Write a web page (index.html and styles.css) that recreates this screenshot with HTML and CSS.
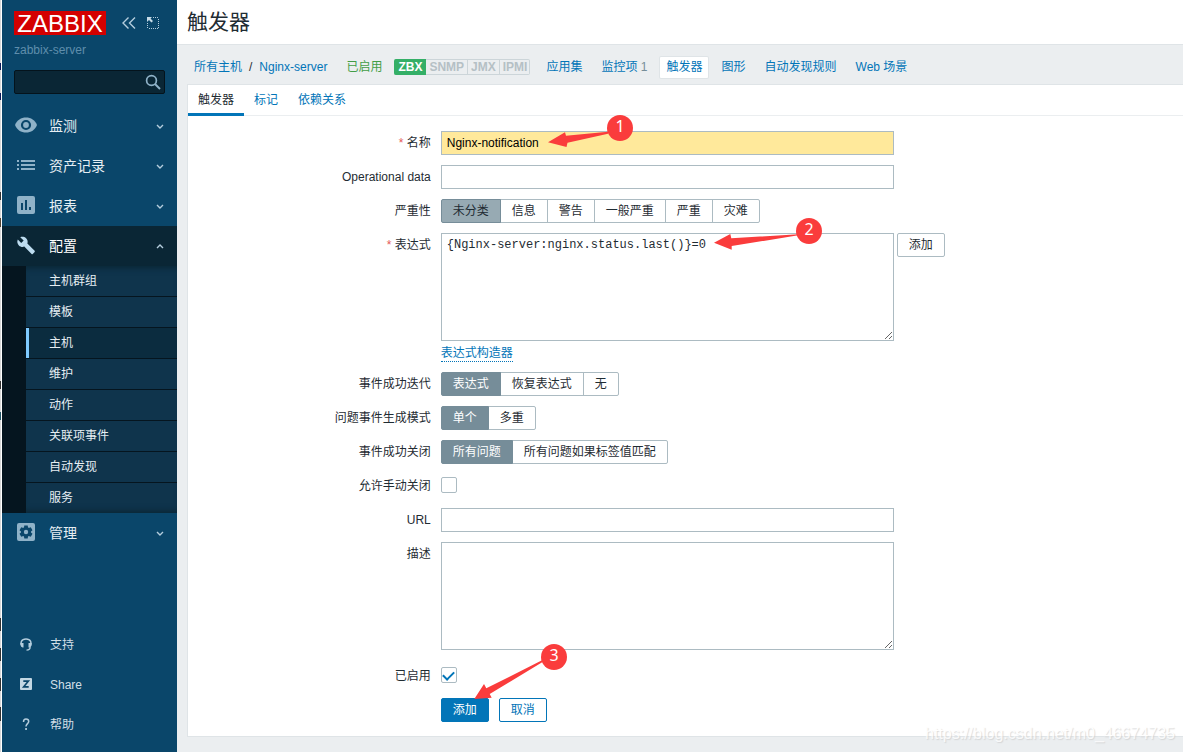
FILE: index.html
```html
<!DOCTYPE html>
<html lang="zh-CN">
<head>
<meta charset="utf-8">
<title>触发器</title>
<link rel="stylesheet" href="styles.css">
</head>
<body>
<div class="edge"></div>
<aside class="sidebar">
  <div class="brand">
    <a href="#" class="logo">ZABBIX</a>
    <button class="icon-btn" type="button" aria-label="收起"><svg width="16" height="14" viewBox="0 0 16 14"><path d="M7.500 1.500 2 7l5.500 5.500M14 1.500 8.500 7l5.500 5.500" fill="none" stroke="#b4cddd" stroke-width="1.400"/></svg></button>
    <button class="icon-btn" type="button" aria-label="隐藏"><svg width="14" height="14" viewBox="0 0 14 14"><path d="M7 1.500h6M12.500 3v10M1.500 7v6M3 12.500h9" fill="none" stroke="#b4cddd" stroke-dasharray="1 1"/><path d="M1 1h5L4.500 2.500 7 5 5.500 6.500 3 4 1 6z" fill="#c8dce8"/></svg></button>
  </div>
  <div class="server">zabbix-server</div>
  <form class="search">
    <input type="search" aria-label="搜索">
    <button type="button" aria-label="搜索"><svg width="16" height="16" viewBox="0 0 16 16"><circle cx="6.500" cy="6.500" r="4.900" fill="none" stroke="#8fb2c8" stroke-width="1.700"/><path d="m10 10 5 5" stroke="#8fb2c8" stroke-width="2"/></svg></button>
  </form>
  <nav class="menu">
    <a href="#" class="item"><svg class="ico" viewBox="0 0 22 20"><path d="M0 9C2 4 6 1.500 11 1.500S20 4 22 9c-2 5-6 7.500-11 7.500S2 14 0 9z"/><circle cx="11" cy="9" r="4" fill="none" stroke="#0a466a" stroke-width="2.200"/></svg><span>监测</span><svg class="chev" viewBox="0 0 8 6"><path d="m1 2 3 3 3-3"/></svg></a>
    <a href="#" class="item"><svg class="ico" viewBox="0 0 22 20"><path d="M2 4h2v2H2zM6 4h14v2H6zM2 8h2v2H2zM6 8h14v2H6zM2 12h2v2H2zM6 12h14v2H6z"/></svg><span>资产记录</span><svg class="chev" viewBox="0 0 8 6"><path d="m1 2 3 3 3-3"/></svg></a>
    <a href="#" class="item"><svg class="ico" viewBox="0 0 22 20"><rect x="2" y="0" width="18" height="18" rx="2"/><path fill="#0a466a" d="M6 7h2v7H6zM10 4h2v10h-2zM14 11h2v3h-2z"/></svg><span>报表</span><svg class="chev" viewBox="0 0 8 6"><path d="m1 2 3 3 3-3"/></svg></a>
    <a href="#" class="item open"><svg class="ico" viewBox="0 0 22 20"><path d="M19.600 16.500 11.500 8.400c.8-2 .3-4.400-1.400-6C8.300.700 5.700.300 3.600 1.300l3.800 3.800-2.700 2.600L.900 4C-.200 6.100.300 8.700 2.100 10.500c1.600 1.600 4 2.100 6 1.300l8.100 8.100c.4.400.9.400 1.300 0l2.100-2.100c.4-.300.4-1 0-1.300z" transform="translate(2 0) scale(.9)"/></svg><span>配置</span><svg class="chev" viewBox="0 0 8 6"><path d="m1 5 3-3 3 3"/></svg></a>
    <div class="submenu">
      <a href="#">主机群组</a>
      <a href="#">模板</a>
      <a href="#" class="current">主机</a>
      <a href="#">维护</a>
      <a href="#">动作</a>
      <a href="#">关联项事件</a>
      <a href="#">自动发现</a>
      <a href="#">服务</a>
    </div>
    <a href="#" class="item"><svg class="ico" viewBox="0 0 22 20"><rect x="2" y="0" width="18" height="18" rx="2"/><g fill="#0a466a"><circle cx="11" cy="9" r="5"/><path d="M9.300 2.500h3.400l.5 3H8.800zM9.300 15.500h3.400l.5-3H8.800z"/><path d="M9.300 2.500h3.400l.5 3H8.800zM9.300 15.500h3.400l.5-3H8.800z" transform="rotate(60 11 9)"/><path d="M9.300 2.500h3.400l.5 3H8.800zM9.300 15.500h3.400l.5-3H8.800z" transform="rotate(120 11 9)"/></g><circle cx="11" cy="9" r="2.200"/></svg><span>管理</span><svg class="chev" viewBox="0 0 8 6"><path d="m1 2 3 3 3-3"/></svg></a>
  </nav>
  <nav class="foot">
    <a href="#"><svg viewBox="0 0 14 14"><path d="M3 8.500C.500 5 2.500 1 7 1S13.500 5 11 8.500" fill="none" stroke="#b4cddd" stroke-width="1.500"/><path d="M1.600 5h2.900v4.500H3.500L2 8zM9.500 5h2.900v3L10.500 9.500h-1zM10.500 9h1.300c0 2.500-1.300 3.700-4.300 3.700v-1.300c2 0 3-.7 3-2.400z" fill="#b4cddd"/></svg>支持</a>
    <a href="#"><svg viewBox="0 0 14 14"><rect x="1" y="0" width="12" height="12" rx="1" fill="#c3d7e3"/><path d="M4.300 3.200h5L4.700 8.800h5" fill="none" stroke="#0a466a" stroke-width="1.700"/></svg>Share</a>
    <a href="#"><svg viewBox="0 0 14 14"><path d="M4.500 4C4.500 2 5.500 1 7 1s2.700 1 2.700 2.500C9.700 5.500 7 5.800 7 8.500" fill="none" stroke="#b4cddd" stroke-width="1.500"/><path d="M6.200 10h1.700v2H6.200z" fill="#b4cddd"/></svg>帮助</a>
  </nav>
</aside>
<main class="page">
  <header class="title"><h1>触发器</h1></header>
  <nav class="crumbs">
    <a href="#">所有主机</a><span class="slash">/</span><a href="#">Nginx-server</a>
    <span class="enabled">已启用</span>
    <span class="avail"><span class="on">ZBX</span><span>SNMP</span><span>JMX</span><span>IPMI</span></span>
    <span class="links"><a href="#">应用集</a><a href="#">监控项 <sup>1</sup></a><a href="#" class="here">触发器</a><a href="#">图形</a><a href="#">自动发现规则</a><a href="#">Web 场景</a></span>
  </nav>
  <section class="card">
    <nav class="tabs"><a href="#" class="active">触发器</a><a href="#">标记</a><a href="#">依赖关系</a></nav>
    <form class="form">
      <label class="label req" for="name">名称</label>
      <div class="field">
        <input class="text name" id="name" type="text" value="Nginx-notification">
        <svg class="note note-1" width="88" height="36" viewBox="547 114 88 36"><path d="M548 142.300 565 132.300l1 3.500 42-4v2l-40.500 9-1 4.200z"/><circle cx="620" cy="128" r="13"/><text x="620" y="132">1</text></svg>
      </div>
      <label class="label" for="opdata">Operational data</label>
      <div class="field"><input class="text" id="opdata" type="text"></div>
      <span class="label" id="l-sev">严重性</span>
      <div class="field"><div class="seg sev" role="radiogroup" aria-labelledby="l-sev">
        <label><input type="radio" name="sev" checked><span>未分类</span></label><label><input type="radio" name="sev"><span>信息</span></label><label><input type="radio" name="sev"><span>警告</span></label><label><input type="radio" name="sev"><span>一般严重</span></label><label><input type="radio" name="sev"><span>严重</span></label><label><input type="radio" name="sev"><span>灾难</span></label>
      </div></div>
      <label class="label req" for="expr">表达式</label>
      <div class="field expr">
        <div class="with-btn"><textarea class="area mono" id="expr" spellcheck="false">{Nginx-server:nginx.status.last()}=0</textarea><button class="btn plain" type="button">添加</button></div>
        <a href="#" class="builder">表达式构造器</a>
        <svg class="note note-2" width="110" height="34" viewBox="713 217 110 34"><path d="M714 242.700 730.300 234l1 4.300 67-4v1l-66.600 10.700v3.700z"/><circle cx="809" cy="231" r="13"/><text x="809" y="235">2</text></svg>
      </div>
      <span class="label" id="l-ok">事件成功迭代</span>
      <div class="field"><div class="seg" role="radiogroup" aria-labelledby="l-ok">
        <label><input type="radio" name="ok" checked><span>表达式</span></label><label><input type="radio" name="ok"><span>恢复表达式</span></label><label><input type="radio" name="ok"><span>无</span></label>
      </div></div>
      <span class="label" id="l-mode">问题事件生成模式</span>
      <div class="field"><div class="seg" role="radiogroup" aria-labelledby="l-mode">
        <label><input type="radio" name="mode" checked><span>单个</span></label><label><input type="radio" name="mode"><span>多重</span></label>
      </div></div>
      <span class="label" id="l-close">事件成功关闭</span>
      <div class="field"><div class="seg" role="radiogroup" aria-labelledby="l-close">
        <label><input type="radio" name="close" checked><span>所有问题</span></label><label><input type="radio" name="close"><span>所有问题如果标签值匹配</span></label>
      </div></div>
      <label class="label" for="manual">允许手动关闭</label>
      <div class="field check"><input id="manual" type="checkbox"></div>
      <label class="label" for="url">URL</label>
      <div class="field"><input class="text" id="url" type="text"></div>
      <label class="label" for="desc">描述</label>
      <div class="field desc"><textarea class="area" id="desc"></textarea></div>
      <label class="label" for="enabled">已启用</label>
      <div class="field check"><input id="enabled" type="checkbox" checked></div>
      <div class="field actions">
        <button class="btn primary" type="button">添加</button>
        <button class="btn" type="button">取消</button>
        <svg class="note note-3" width="95" height="57" viewBox="473 643 95 57"><path d="M474.300 699 484 684l2.300 4.300 55.700-28 1 1.500L489.700 694l2 3.700z"/><circle cx="554" cy="657" r="13"/><text x="554" y="661">3</text></svg>
      </div>
    </form>
  </section>
</main>
<div class="watermark">https://blog.csdn.net/m0_46674735</div>
</body>
</html>
```

FILE: styles.css
```css
* { box-sizing: border-box; }
body {
  margin: 0;
  min-height: 100vh;
  display: flex;
  position: relative;
  background: #ebeef0;
  color: #1f2c33;
  font: 12px/16px "Liberation Sans", "Noto Sans CJK SC", sans-serif;
}
a { color: #0275b8; text-decoration: none; }
button, input, textarea { font: inherit; color: inherit; }

/* sliver of the window behind */
.edge {
  width: 2px;
  flex: none;
  border-right: 1px solid #fff;
  background: linear-gradient(#d8d8d8 0 63px, #0a1a5a 63px 70px, #d8d8d8 70px 93px, #0a1a5a 93px 100px, #d8d8d8 100px 192px, #333 192px 200px, #d8d8d8 200px 218px, #543 218px 227px, #d8d8d8 227px 381px, #333 381px 389px, #d8d8d8 389px 412px, #256 412px 420px, #d8d8d8 420px 618px, #333 618px 631px, #d8d8d8 631px 648px, #333 648px 661px, #d8d8d8 661px 678px, #333 678px 691px, #d8d8d8 691px 707px, #333 707px 721px, #d8d8d8 721px);
}

/* sidebar */
.sidebar { width: 175px; flex: none; display: flex; flex-direction: column; background: #0a466a; }
.brand { display: flex; align-items: center; padding: 11px 12px 0; }
.logo {
  width: 92px; height: 24px; margin-right: 15px;
  background: #d40000; color: #fff;
  font-size: 24px; line-height: 25px; text-align: center;
}
.icon-btn { padding: 0; border: 0; background: none; display: flex; }
.icon-btn + .icon-btn { margin-left: 9px; }
.server { padding: 7px 12px 0; color: #5f8eac; }
.search {
  display: flex; align-items: center; height: 24px; margin: 12px;
  background: #0a2635; border: 1px solid #04131c; border-radius: 2px;
}
.search input { flex: 1; min-width: 0; height: 22px; border: 0; padding: 0 5px; background: none; outline: 0; }
.search button { display: flex; padding: 0 3px 0 0; border: 0; background: none; }
.item { display: flex; align-items: center; height: 40px; padding: 0 13px; color: #e6eef3; font-size: 14px; }
.item span { flex: 1; }
.ico { width: 22px; height: 20px; margin-right: 12px; fill: #8fb2c8; }
.chev { width: 8px; height: 6px; fill: none; stroke: #b4cddd; stroke-width: 1.4; }
.open { background: #0a2635; color: #fff; }
.open .ico { fill: #bddcf0; }
.submenu { padding-left: 24px; background: #05151f; }
.submenu a {
  display: block; height: 31px; padding-left: 23px;
  border-bottom: 1px solid #05151f; background: #0f344c; color: #e6eef3; line-height: 30px;
}
.submenu a:first-child { box-shadow: inset 0 6px 6px -4px #0a2635; }
.submenu a:last-child { height: 30px; border: 0; box-shadow: inset 0 -6px 6px -4px #0a2635; }
.submenu .current { padding-left: 20px; background: #0b2c3f; box-shadow: inset 3px 0 #7fcaff; padding-left: 23px; }
.foot { margin-top: auto; padding-bottom: 7px; }
.foot a { display: flex; align-items: center; height: 40px; padding-left: 17px; color: #d2dfe7; }
.foot svg { width: 14px; height: 14px; margin-right: 17px; }

/* page */
.page { flex: 1; min-width: 0; padding-bottom: 15px; }
.title { height: 45px; padding: 0 10px; background: #fff; border-bottom: 1px solid #dfe4e7; }
h1 { margin: 0; font-size: 21px; font-weight: 400; line-height: 44px; }
.crumbs { display: flex; align-items: center; height: 39px; padding: 5px 17px 0; white-space: nowrap; }
.slash { margin: 0 7px; }
.enabled { margin: 0 12px 0 19px; color: #429e47; }
.avail { display: flex; line-height: 14px; font-weight: 700; }
.avail span { padding: 0 3px; border: 1px solid #ccd5d9; border-left-width: 0; color: #b5c0c5; }
.avail span:last-child { border-radius: 0 2px 2px 0; padding-right: 2px; }
.avail .on { padding: 0 3px 0 4px; border-color: #34af67; background: #34af67; color: #fff; border-radius: 2px 0 0 2px; }
.links { display: flex; gap: 7px; margin-left: 10px; }
.links a { padding: 2px 6px; line-height: 17px; }
.links sup { color: #768d99; font-size: 12px; line-height: 1; vertical-align: baseline; }
.links .here { background: #fff; box-shadow: 0 0 0 1px #dfe4e7; border-radius: 1px; }
.card { margin-left: 10px; background: #fff; border: 1px solid #dfe4e7; border-right: 0; }
.tabs { display: flex; height: 31px; border-bottom: 1px solid #ebeef0; }
.tabs a { height: 31px; padding: 0 10px; line-height: 30px; }
.tabs .active { border-bottom: 3px solid #0275b8; color: #1f2c33; }

/* form */
.form { display: grid; grid-template-columns: 25% minmax(0, 1fr); gap: 10px; padding: 15px 24px 14px 0; }
.label { text-align: right; line-height: 24px; }
.req::before { content: "* "; color: #e45959; }
.field { position: relative; min-height: 24px; }
.text, .area { display: block; width: 453px; max-width: 100%; border: 1px solid #acbbc2; border-radius: 0; background: #fff; outline: 0; }
.text { height: 24px; padding: 0 5px; }
.name { background: #ffe99b; color: #000; }
.area { height: 108px; padding: 4px 5px; line-height: 14px; resize: both; }
.mono { font-family: "Liberation Mono", monospace; }
.with-btn { display: flex; gap: 3px; align-items: flex-start; }
.expr { min-height: 129px; }
.desc { min-height: 112px; }
.builder { display: inline-block; margin-top: 5px; border-bottom: 1px dotted #0275b8; line-height: 15px; }
.btn { height: 24px; padding: 0 11px; border: 1px solid #0275b8; border-radius: 2px; background: #fff; color: #0275b8; line-height: 22px; }
.plain { border-color: #acbbc2; color: #1f2c33; }
.primary { background: #0275b8; color: #fff; }
.seg { display: flex; }
.seg label + label { margin-left: -1px; }
.seg input { position: absolute; opacity: 0; width: 1px; height: 1px; margin: 0; }
.seg span { display: block; height: 24px; padding: 0 11px; border: 1px solid #acbbc2; line-height: 22px; }
.seg label:first-child span { border-radius: 2px 0 0 2px; }
.seg label:last-child span { border-radius: 0 2px 2px 0; }
.seg input:checked + span { position: relative; background: #768d99; border-color: #768d99; color: #fff; }
.sev input:checked + span { background: #97aab3; border-color: #768d99; color: #1f2c33; }
.check { display: flex; align-items: flex-start; padding-top: 3px; }
.check input { appearance: none; width: 16px; height: 16px; margin: 0; border: 1px solid #acbbc2; border-radius: 2px; background: #fff; display: grid; place-items: center; }
.check input:checked::before { content: ""; width: 9px; height: 5px; border: solid #0275b8; border-width: 0 0 2px 2px; transform: translateY(-1px) rotate(-45deg); }
.actions { grid-column: 2; display: flex; gap: 10px; }

/* numbered pointers over the fields */
.note { position: absolute; fill: #fa3c3c; pointer-events: none; z-index: 2; }
.note text { fill: #fff; font: 16px "Noto Sans", sans-serif; text-anchor: middle; }
.note-1 { left: 106px; top: -17px; }
.note-2 { left: 272px; top: -16px; }
.note-3 { left: 32px; top: -55px; }
.watermark { position: absolute; right: 8px; bottom: 8px; color: #fff; font-size: 16px; line-height: 20px; text-shadow: 1px 1px 1px #ccc; opacity: .7; }
```
